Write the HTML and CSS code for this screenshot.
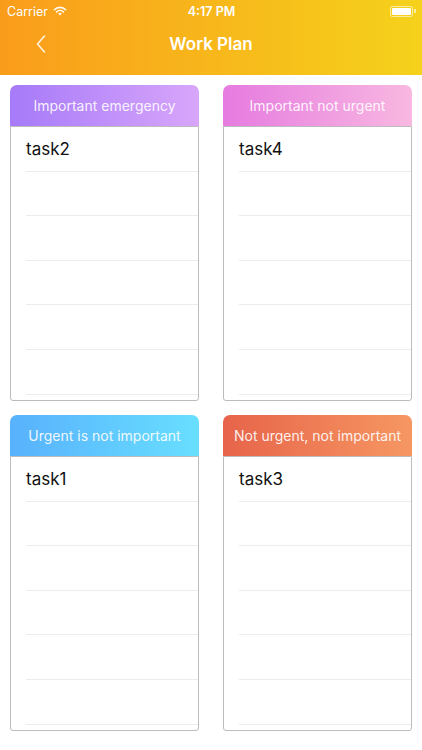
FILE: index.html
```html
<!DOCTYPE html>
<html>
<head>
    <title>Work Plan</title>
    <meta charset="UTF-8">
    <link rel="stylesheet" href="styles.css">
</head>
<body>
    <div class="top">
        <div class="status-bar">
            <div class="carrier">
                Carrier
                <svg class="wifi" width="14" height="10" viewBox="0 0 14 10">
                    <path d="M7 9.6 L5.2 7.6 A2.6 2.6 0 0 1 8.8 7.6 Z" fill="#fff"/>
                    <path d="M3.6 5.9 A4.9 4.9 0 0 1 10.4 5.9" stroke="#fff" stroke-width="1.6" fill="none" stroke-linecap="round"/>
                    <path d="M1.4 3.7 A8 8 0 0 1 12.6 3.7" stroke="#fff" stroke-width="1.6" fill="none" stroke-linecap="round"/>
                </svg>
            </div>
            <div class="time">4:17 PM</div>
            <div class="battery">
                <div class="battery-body"><div class="battery-fill"></div></div>
                <div class="battery-tip"></div>
            </div>
        </div>
        <div class="nav">
            <svg class="back" width="10" height="18" viewBox="0 0 10 18">
                <path d="M8.5 1 L1.5 9 L8.5 17" stroke="#fff" stroke-opacity="0.85" stroke-width="1.6" fill="none" stroke-linecap="round" stroke-linejoin="round"/>
            </svg>
            <div class="title">Work Plan</div>
        </div>
    </div>

    <div class="grid">
        <div class="quad">
            <div class="quad-head purple">Important emergency</div>
            <div class="quad-body">
                <div class="row">task2</div>
                <div class="row"></div>
                <div class="row"></div>
                <div class="row"></div>
                <div class="row"></div>
                <div class="row"></div>
            </div>
        </div>
        <div class="quad">
            <div class="quad-head pink">Important not urgent</div>
            <div class="quad-body">
                <div class="row">task4</div>
                <div class="row"></div>
                <div class="row"></div>
                <div class="row"></div>
                <div class="row"></div>
                <div class="row"></div>
            </div>
        </div>
        <div class="quad">
            <div class="quad-head blue">Urgent is not important</div>
            <div class="quad-body">
                <div class="row">task1</div>
                <div class="row"></div>
                <div class="row"></div>
                <div class="row"></div>
                <div class="row"></div>
                <div class="row"></div>
            </div>
        </div>
        <div class="quad">
            <div class="quad-head orange">Not urgent, not important</div>
            <div class="quad-body">
                <div class="row">task3</div>
                <div class="row"></div>
                <div class="row"></div>
                <div class="row"></div>
                <div class="row"></div>
                <div class="row"></div>
            </div>
        </div>
    </div>
</body>
</html>
```

FILE: styles.css
```css
body {
    font-family: Inter, 'Noto Sans', 'Liberation Sans', sans-serif;
    margin: 0;
    background: #fff;
    color: #111;
}

.top {
    height: 75px;
    background: linear-gradient(to right, #fa9c1b, #f5d21b);
    color: #fff;
}

.status-bar {
    height: 22px;
    display: flex;
    align-items: center;
    justify-content: space-between;
    padding: 0 6px 0 7px;
    font-size: 12.5px;
}

.carrier {
    display: flex;
    align-items: center;
    gap: 5px;
    width: 80px;
}

.time {
    font-weight: 600;
}

.battery {
    width: 80px;
    display: flex;
    justify-content: flex-end;
    align-items: center;
}

.battery-body {
    width: 21px;
    height: 9px;
    border: 1px solid rgba(255,255,255,0.6);
    border-radius: 2.5px;
    padding: 1px;
    box-sizing: border-box;
    width: 23px;
    height: 11px;
}

.battery-fill {
    background: #fff;
    height: 100%;
    border-radius: 1px;
}

.battery-tip {
    width: 1.5px;
    height: 4px;
    background: rgba(255,255,255,0.6);
    margin-left: 1px;
}

.nav {
    height: 44px;
    display: flex;
    align-items: center;
    justify-content: center;
    position: relative;
}

.back {
    position: absolute;
    left: 36px;
    top: 13px;
}

.title {
    font-size: 17px;
    font-weight: 600;
}

.grid {
    display: grid;
    grid-template-columns: 189px 189px;
    column-gap: 24px;
    row-gap: 14px;
    padding: 10px 10px 0;
}

.quad-head {
    height: 41px;
    border-radius: 7px 7px 0 0;
    display: flex;
    align-items: center;
    justify-content: center;
    color: rgba(255,255,255,0.9);
    font-size: 14px;
}

.purple { background: linear-gradient(to right, #a67af9, #d8a6fa); }
.pink { background: linear-gradient(to right, #e67be0, #f8b8e1); }
.blue { background: linear-gradient(to right, #58b1fc, #68dfff); }
.orange { background: linear-gradient(to right, #e7644a, #f69762); }

.quad-body {
    height: 275px;
    box-sizing: border-box;
    border: 1px solid #bcbcbc;
    border-radius: 0 0 3px 3px;
    padding-left: 15px;
    overflow: hidden;
}

.row {
    height: 44.6px;
    box-sizing: border-box;
    border-bottom: 1px solid #ececec;
    display: flex;
    align-items: center;
    font-size: 17px;
    color: #111;
}
```
